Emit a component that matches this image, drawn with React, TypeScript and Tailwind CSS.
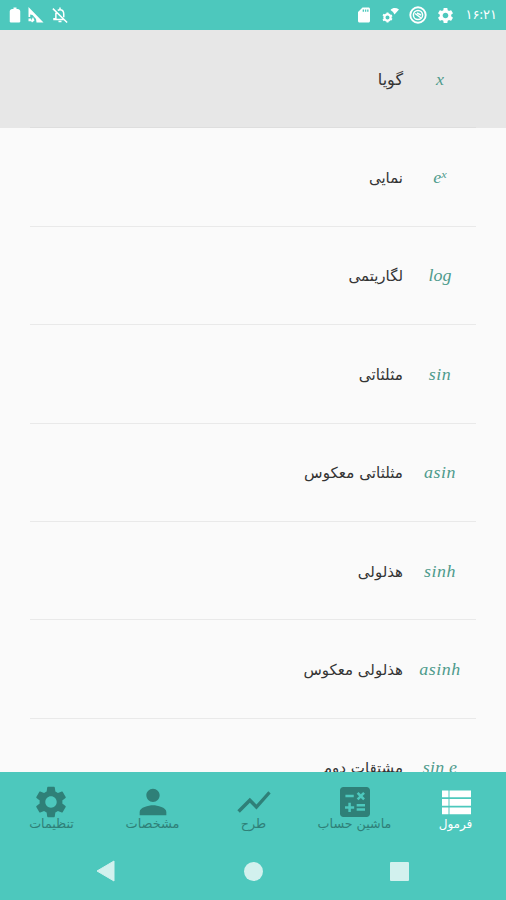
import type { ReactNode } from 'react';
import { MdCalculate, MdPerson, MdSettings, MdShowChart } from 'react-icons/md';

type Formula = { symbol: ReactNode; label: string; size: string; spacing: string };

const formulas: Formula[] = [
  { symbol: 'x', label: 'گویا', size: 'text-[16px]', spacing: 'tracking-normal' },
  { symbol: <>e<span className="relative -top-[5px] text-[11px]">x</span></>, label: 'نمایی', size: 'text-[15px]', spacing: 'tracking-normal' },
  { symbol: 'log', label: 'لگاریتمی', size: 'text-[15px]', spacing: 'tracking-[0px]' },
  { symbol: 'sin', label: 'مثلثاتی', size: 'text-[15.300px]', spacing: 'tracking-[0.5px]' },
  { symbol: 'asin', label: 'مثلثاتی معکوس', size: 'text-[15.200px]', spacing: 'tracking-[0.5px]' },
  { symbol: 'sinh', label: 'هذلولی', size: 'text-[15px]', spacing: 'tracking-[0.5px]' },
  { symbol: 'asinh', label: 'هذلولی معکوس', size: 'text-[15px]', spacing: 'tracking-[0.5px]' },
  { symbol: 'sin e', label: 'مشتقات دوم', size: 'text-[15px]', spacing: 'tracking-[0.2px]' },
];

function StatusBar() {
  return (
    <header className="flex h-[30px] shrink-0 items-center bg-[#4dc8bd] pl-[6px] pr-[9px] text-white">
      <svg className="h-[18px] w-[18px]" viewBox="0 0 24 24" fill="currentColor"><path d="M15.700 4H14V2h-4v2H8.300C6.600 4 5 5.500 5 7v13.500C5 21.500 6 22 7 22h10c1 0 2-.5 2-1.500V7c0-1.500-1.600-3-3.300-3z" /></svg>
      <svg className="ml-[4px] h-[18px] w-[18px]" viewBox="0 0 18 18" fill="currentColor"><path d="M.5 1 15.500 16.500H8.500L8 13 4.500 9 2.200 8.500V11H.5zM.5 12.500h2.700v2.800H.5zM5 11l1.500 3.500L4 16.500 3 15z" /></svg>
      <svg className="ml-[5px] h-[18px] w-[18px]" viewBox="0 0 24 24" fill="none" stroke="currentColor" strokeWidth="2"><path d="M2.500 3.500 21.500 22M6.500 9v8H4v1h13M9 5.800C10 5 11 5 12 5c3.500 0 5 3 5 6v4M12 2v3M10 20.500h4" /></svg>
      <div className="grow" />
      <svg className="h-[18px] w-[18px]" viewBox="0 0 24 24" fill="currentColor"><path fillRule="evenodd" d="M18 2h-8L4 8v12c0 1.100.9 2 2 2h12c1.100 0 2-.9 2-2V4c0-1.100-.9-2-2-2zm-6 5.500h-1.800V4.500H12zm3 0h-1.800V4.500H15zm3 0h-1.800V4.500H18z" /></svg>
      <svg className="ml-[9px] h-[18px] w-[18px]" viewBox="0 0 18 18" fill="currentColor"><path d="M8.500 4C11 1.500 14 1.500 17 3.500L12.500 8.500 11 6z" /><circle cx="5.500" cy="11.500" r="3.100" fill="none" stroke="currentColor" strokeWidth="2.200" /><path d="M4.500 6.500h2v2h-2zM4.500 14.500h2v2h-2zM.5 9.500l1-1.700 2 1-1 1.700zM7.500 13.500l1-1.700 2 1-1 1.700zM.5 13.500l1 1.700 2-1-1-1.700zM7.500 9.500l1 1.700 2-1-1-1.700z" /></svg>
      <svg className="ml-[9px] h-[18px] w-[18px]" viewBox="0 0 18 18" fill="none" stroke="currentColor"><circle cx="9" cy="9" r="7.700" strokeWidth="1.900" /><circle cx="9" cy="9" r="4.600" strokeWidth="1.500" /><path d="M6 7.500 12 12M8 7l4 2" strokeWidth="1.500" /></svg>
      <MdSettings className="ml-[9px] h-[19px] w-[19px]" />
      <time dir="rtl" className="ml-[11px] w-[31px] whitespace-nowrap text-center font-['Noto_Sans','DejaVu_Sans',sans-serif] text-[13px] tracking-[-1.200px]">۱۶:۲۱</time>
    </header>
  );
}

function FormulaRow({ item, selected }: { item: Formula; selected: boolean }) {
  return (
    <li className={`flex h-[98.400px] shrink-0 px-[30px] ${selected ? 'bg-[#e7e7e7]' : ''}`}>
      <div className={`flex grow items-center border-b pt-[2px] ${selected ? 'border-[#dedede]' : 'border-[#e9e9e9]'}`}>
        <div dir="ltr" className={`w-[73px] scale-x-[1.120] pl-[1px] text-center font-['Liberation_Serif',serif] text-[16px] italic leading-5 text-[#4e9b8c] ${item.spacing}`}>{item.symbol}</div>
        <span className={`font-['DejaVu_Sans',sans-serif] leading-6 text-[#343434] ${item.size}`}>{item.label}</span>
      </div>
    </li>
  );
}

function ListIcon() {
  return (
    <svg className="h-[25px] w-[30px]" viewBox="0 0 30 25" fill="currentColor">
      <path d="M1 .5h6.500v6.700H1zM8.500 .5h21.500v6.700H8.500zM1 9h6.500v6.700H1zM8.500 9h21.500v6.700H8.500zM1 17.500h6.500v6.700H1zM8.500 17.500h21.500v6.700H8.500z" />
    </svg>
  );
}

const tabs = [
  { label: 'فرمول', icon: <ListIcon />, active: true, size: 'text-[12px]' },
  { label: 'ماشین حساب', icon: <MdCalculate className="h-[40px] w-[40px]" />, active: false, size: 'text-[12.700px]' },
  { label: 'طرح', icon: <MdShowChart className="h-[40px] w-[40px]" />, active: false, size: 'text-[12.700px]' },
  { label: 'مشخصات', icon: <MdPerson className="h-[40px] w-[40px]" />, active: false, size: 'text-[12.900px]' },
  { label: 'تنظیمات', icon: <MdSettings className="mr-[1px] h-[38px] w-[38px]" />, active: false, size: 'text-[12.700px]' },
];

export default function App() {
  return (
    <div className="flex h-[900px] w-[506px] flex-col overflow-hidden bg-[#fafafa]">
      <StatusBar />
      <main className="h-[742px] shrink-0 overflow-hidden">
        <ul dir="rtl" className="flex flex-col">
          {formulas.map((item, i) => <FormulaRow key={item.label} item={item} selected={i === 0} />)}
        </ul>
      </main>
      <footer className="h-[128px] bg-[#4dc8bd]">
        <nav dir="rtl" className="grid h-[70px] grid-cols-5 pl-[1px]">
          {tabs.map((tab) => (
            <div key={tab.label} className={`flex flex-col items-center pt-[10px] ${tab.active ? 'text-white' : 'text-[#2f8078]'}`}>
              <div className="flex h-[40px] items-center">{tab.icon}</div>
              <span className={`-mt-[8px] whitespace-nowrap font-['DejaVu_Sans',sans-serif] leading-5 ${tab.size}`}>{tab.label}</span>
            </div>
          ))}
        </nav>
        <div className="flex h-[58px] items-center pl-[96px] text-[#d2f1ee]">
          <svg className="h-[22px] w-[20px]" viewBox="0 0 20 22" fill="currentColor"><path d="M18 1v20L1 11z" stroke="currentColor" strokeLinejoin="round" /></svg>
          <div className="ml-[128px] h-[19px] w-[19px] rounded-full bg-current" />
          <div className="ml-[127px] h-[19px] w-[19px] rounded-[1px] bg-current" />
        </div>
      </footer>
    </div>
  );
}
